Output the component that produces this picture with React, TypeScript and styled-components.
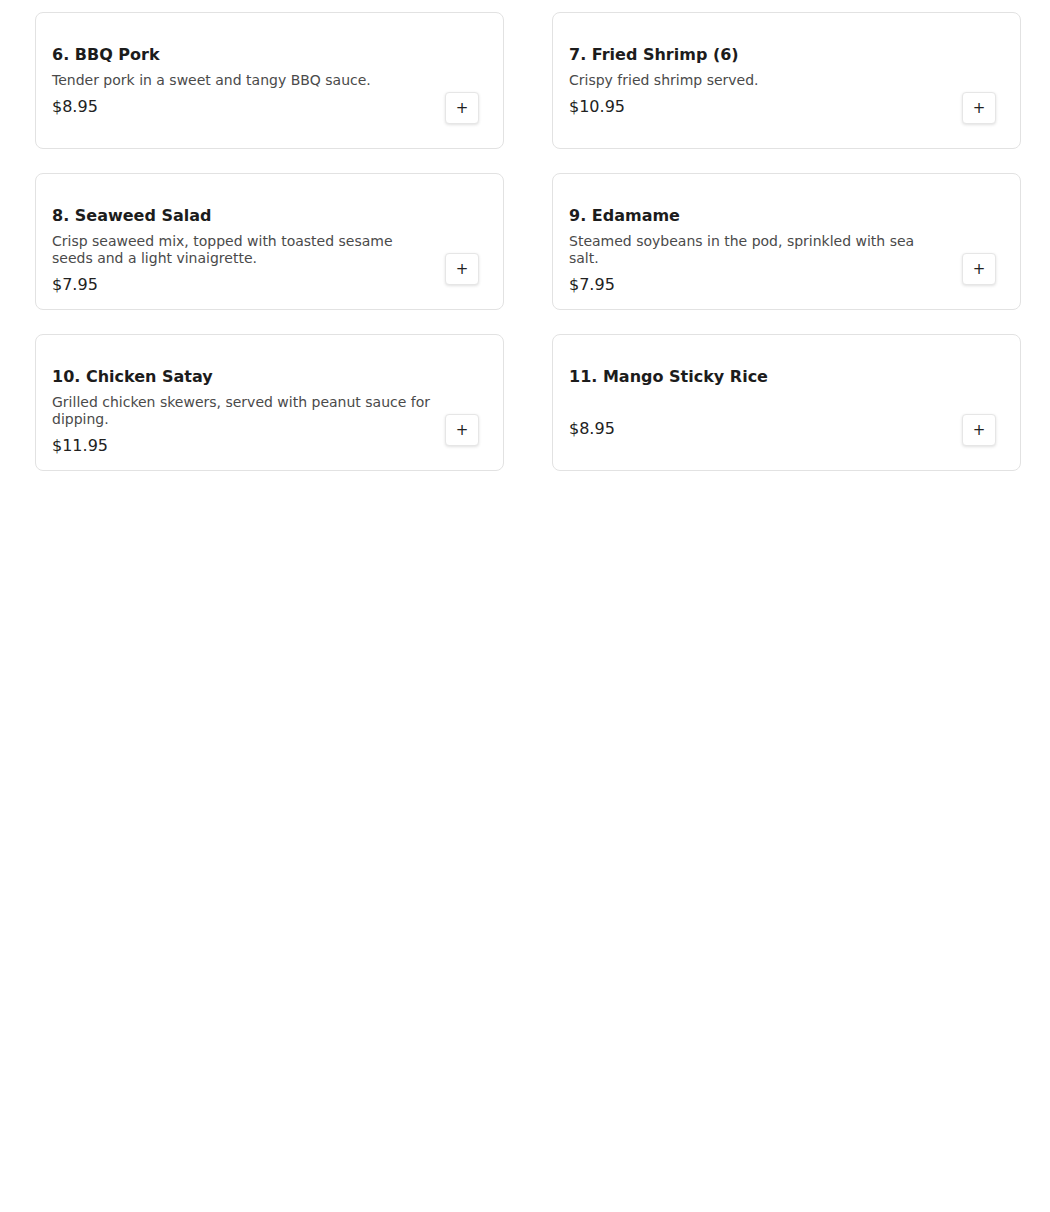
import React from "react";
import styled, { createGlobalStyle } from "styled-components";

const Global = createGlobalStyle`
  html, body { margin: 0; padding: 0; background: #ffffff; }
  body { font-family: "DejaVu Sans", "Noto Sans", sans-serif; }
  * { box-sizing: border-box; }
`;

const Page = styled.div`
  padding: 12px 29px 0 35px;
`;

const Grid = styled.div`
  display: grid;
  grid-template-columns: 1fr 1fr;
  column-gap: 48px;
  row-gap: 24px;
`;

const Card = styled.div`
  height: 137px;
  border: 1px solid #e2e2e2;
  border-radius: 8px;
  background: #fff;
  display: flex;
  align-items: flex-start;
  gap: 14px;
  padding: 30px 24px 24px 16px;
`;

const Info = styled.div`
  flex: 1;
  min-width: 0;
  display: flex;
  flex-direction: column;
`;

const Title = styled.div`
  font-size: 16px;
  font-weight: bold;
  line-height: 24px;
  color: #1c1c1c;
  margin-bottom: 5px;
`;

const Desc = styled.div`
  font-size: 14px;
  line-height: 17px;
  color: #4a4a4a;
  min-height: 17px;
`;

const Price = styled.div`
  font-size: 16px;
  line-height: 24px;
  color: #222;
  margin-top: 6px;
`;

const AddButton = styled.button`
  align-self: flex-end;
  flex: none;
  width: 34px;
  height: 32px;
  border: 1px solid #e6e6e6;
  border-radius: 4px;
  background: #fff;
  box-shadow: 0 1px 3px rgba(0, 0, 0, 0.12);
  font-family: "DejaVu Sans", sans-serif;
  font-size: 15px;
  color: #222;
  padding: 0;
  display: flex;
  align-items: center;
  justify-content: center;
  cursor: pointer;
`;

const items = [
  { name: "6. BBQ Pork", desc: "Tender pork in a sweet and tangy BBQ sauce.", price: "$8.95" },
  { name: "7. Fried Shrimp (6)", desc: "Crispy fried shrimp served.", price: "$10.95" },
  { name: "8. Seaweed Salad", desc: "Crisp seaweed mix, topped with toasted sesame seeds and a light vinaigrette.", price: "$7.95" },
  { name: "9. Edamame", desc: "Steamed soybeans in the pod, sprinkled with sea salt.", price: "$7.95" },
  { name: "10. Chicken Satay", desc: "Grilled chicken skewers, served with peanut sauce for dipping.", price: "$11.95" },
  { name: "11. Mango Sticky Rice", desc: "", price: "$8.95" },
];

export default function App() {
  return (
    <Page>
      <Global />
      <Grid>
        {items.map((it) => (
          <Card key={it.name}>
            <Info>
              <Title>{it.name}</Title>
              <Desc>{it.desc}</Desc>
              <Price>{it.price}</Price>
            </Info>
            <AddButton>+</AddButton>
          </Card>
        ))}
      </Grid>
    </Page>
  );
}
